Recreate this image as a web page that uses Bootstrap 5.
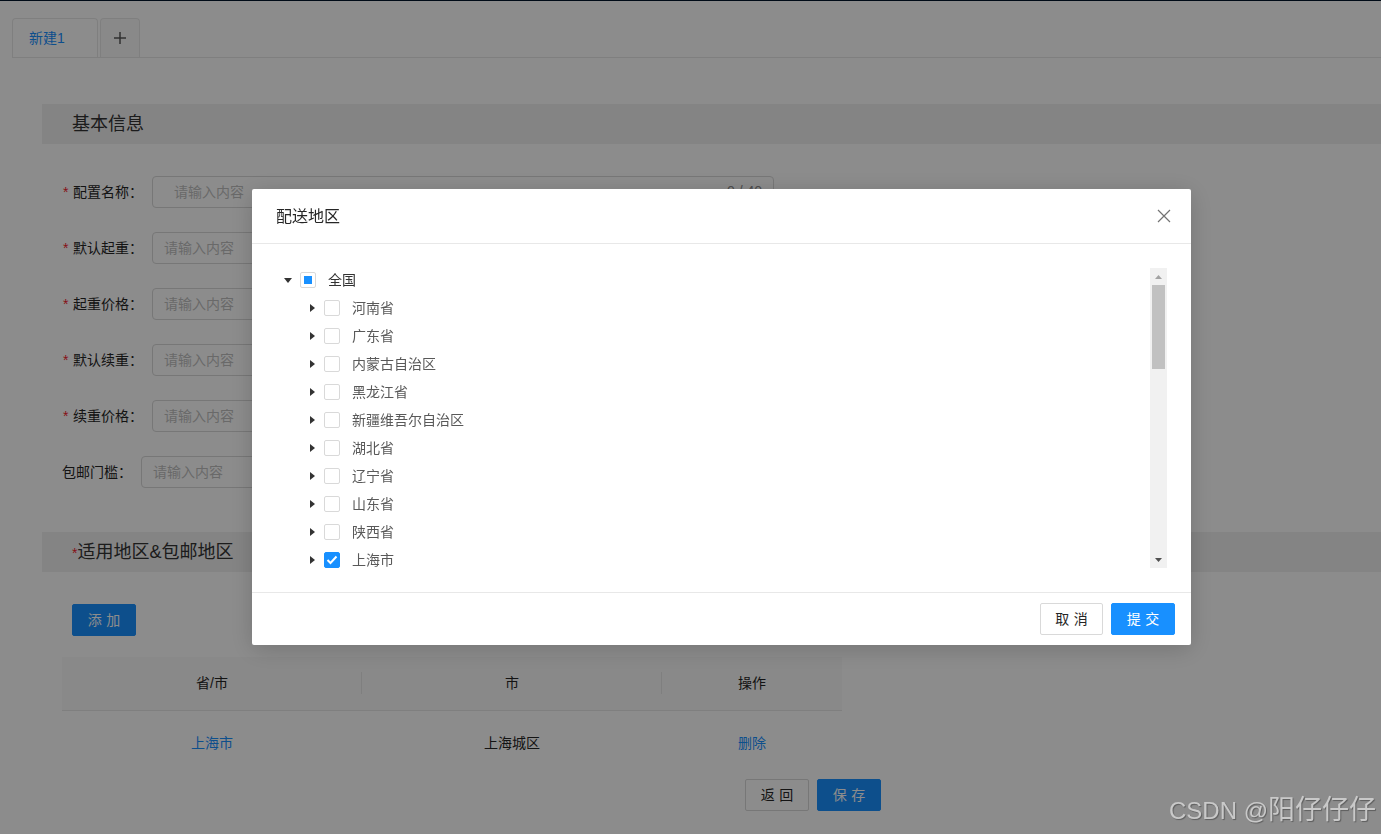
<!DOCTYPE html>
<html lang="zh-CN">
<head>
<meta charset="utf-8">
<title>配送地区</title>
<link href="https://cdn.jsdelivr.net/npm/bootstrap@5.3.0/dist/css/bootstrap.min.css" rel="stylesheet">
<style>
html,body{height:834px;overflow:hidden;background:#fff}
body{font-family:"Liberation Sans","Noto Sans CJK SC",sans-serif;font-size:14px;color:#262626;border-top:1px solid #00152a}
.tabs-bar{margin:17px 0 0 12px;border-bottom:1px solid #e8e8e8;gap:2px}
.tabs-bar .nav-link{height:39px;border:1px solid #e8e8e8;border-bottom:0;border-radius:4px 4px 0 0;margin:0;padding:0;display:flex;align-items:center;justify-content:center}
.tabs-bar .nav-link.tab-main{width:86px;color:#1890ff;background:#fff;justify-content:flex-start;padding-left:16px}
.tab-add{width:40px;background:#fafafa;color:#595959}
.content{padding:46px 0 0 42px}
.sec-title{height:40px;background:#f0f0f0;padding-left:30px;font-size:18px;line-height:41px;color:#333}
.star{color:#f5222d}
.sec-title .star{font-size:14px}
.form-area{padding:32px 0 44px 20px}
.frow{height:32px;gap:9px}
.flabel{color:#262626;white-space:nowrap}
.flabel .star{display:inline-block;width:10px;margin-left:1px;font-family:"Liberation Sans",sans-serif}
.fake-input{height:32px;width:300px;border:1px solid #d9d9d9;border-radius:4px;padding:4px 11px;font-size:14px}
.fake-input::placeholder{color:#bfbfbf}
.fake-input.wide{width:622px;padding-left:21px}
.input-wrap{position:relative}
.counter{position:absolute;right:12px;top:5px;color:#8c8c8c}
.btn-ant{width:64px;height:32px;padding:0;border-radius:2px;font-size:14px;word-spacing:.06em;line-height:30px}
.btn-blue{background:#1890ff;border:1px solid #1890ff;color:#fff}
.btn-plain{background:#fff;border:1px solid #d9d9d9;color:#262626}
.add-row{padding:32px 0 21px 30px}
.area-table{width:780px;margin:0 0 4px 20px;table-layout:fixed;--bs-table-bg:transparent}
.area-table th{height:53px;background:#fafafa;font-weight:400;text-align:center;vertical-align:middle;position:relative;border-bottom:1px solid #e8e8e8;padding:0;color:#262626}
.area-table th:not(:last-child)::after{content:"";position:absolute;right:0;top:15px;height:22px;width:1px;background:#e8e8e8}
.area-table td{height:65px;text-align:center;vertical-align:middle;border:0;padding:1px 0 0;color:#262626}
.link-blue{color:#1890ff;text-decoration:none}
.bottom-btns{margin-left:703px;gap:8px}
.modal-backdrop{--bs-backdrop-opacity:.45}
.modal-dialog.area-dialog{width:939px;max-width:939px;margin:189px 0 0 252px}
.area-dialog .modal-content{border:0;border-radius:2px;box-shadow:0 4px 24px rgba(0,0,0,.18)}
.area-dialog .modal-header{height:55px;padding:0 15px 0 24px;border-bottom:1px solid #e8e8e8;border-radius:0}
.area-dialog .modal-title{font-size:16px;line-height:22px;font-weight:400;color:#262626;margin-top:2px}
.x-btn{width:24px;height:24px;background:none;border:0;padding:0;display:flex;align-items:center;justify-content:center}
.area-dialog .modal-body{padding:24px}
.tree-box{height:300px;gap:0}
.tree{height:300px;overflow:hidden;gap:4px}
.tnode{height:24px;flex:0 0 24px;color:#595959}
.tnode.root{color:#333}
.tnode.child{padding-left:24px}
.sw{width:24px;display:flex;align-items:center;justify-content:center}
.ck{width:16px;height:16px;border:1px solid #d9d9d9;border-radius:2px;background:#fff;margin-right:12px;display:flex;align-items:center;justify-content:center}
.ck.half::before{content:"";width:8px;height:8px;background:#1890ff}
.ck.on{background:#1890ff;border-color:#1890ff}
.sbar{width:17px;height:300px;background:#f1f1f1;flex:0 0 17px}
.sbtn{height:17px;display:flex;align-items:center;justify-content:center}
.sthumb{height:84px;margin:0 2px;background:#c1c1c1}
.area-dialog .modal-footer{height:53px;padding:0 16px;border-top:1px solid #e8e8e8;gap:8px;border-radius:0}
.area-dialog .modal-footer>*{margin:0}
.area-dialog .modal-footer .btn-plain{width:63px}
.watermark{position:fixed;left:1169px;top:791px;z-index:2000;font-size:24px;line-height:38px;color:#c9c9c9;text-shadow:1px 1px 1px #5e5e5e;white-space:nowrap}
.watermark span{font-size:27px}
</style>
</head>
<body>
<ul class="nav tabs-bar">
  <li class="nav-item"><a class="nav-link tab-main" href="#">新建1</a></li>
  <li class="nav-item"><a class="nav-link tab-add" href="#" aria-label="add">
    <svg width="14" height="14" viewBox="0 0 14 14"><path d="M7 1v12M1 7h12" stroke="#595959" stroke-width="1.5" fill="none"/></svg>
  </a></li>
</ul>

<div class="content">
  <div class="sec-title">基本信息</div>
  <div class="form-area d-flex flex-column gap-4">
    <div class="frow d-flex align-items-center"><label class="flabel"><span class="star">*</span>配置名称：</label>
      <div class="input-wrap"><input class="fake-input wide" placeholder="请输入内容"><span class="counter">0 / 40</span></div></div>
    <div class="frow d-flex align-items-center"><label class="flabel"><span class="star">*</span>默认起重：</label><input class="fake-input" placeholder="请输入内容"></div>
    <div class="frow d-flex align-items-center"><label class="flabel"><span class="star">*</span>起重价格：</label><input class="fake-input" placeholder="请输入内容"></div>
    <div class="frow d-flex align-items-center"><label class="flabel"><span class="star">*</span>默认续重：</label><input class="fake-input" placeholder="请输入内容"></div>
    <div class="frow d-flex align-items-center"><label class="flabel"><span class="star">*</span>续重价格：</label><input class="fake-input" placeholder="请输入内容"></div>
    <div class="frow d-flex align-items-center"><label class="flabel">包邮门槛：</label><input class="fake-input" placeholder="请输入内容"></div>
  </div>
  <div class="sec-title"><span class="star">*</span>适用地区&amp;包邮地区</div>
  <div class="add-row"><button class="btn btn-ant btn-blue" type="button">添 加</button></div>
  <table class="table area-table">
    <colgroup><col style="width:300px"><col style="width:300px"><col style="width:180px"></colgroup>
    <thead><tr><th>省/市</th><th>市</th><th>操作</th></tr></thead>
    <tbody><tr><td><a class="link-blue" href="#">上海市</a></td><td>上海城区</td><td><a class="link-blue" href="#">删除</a></td></tr></tbody>
  </table>
  <div class="bottom-btns d-flex">
    <button class="btn btn-ant btn-plain" type="button">返 回</button>
    <button class="btn btn-ant btn-blue" type="button">保 存</button>
  </div>
</div>

<div class="modal-backdrop fade show"></div>
<div class="modal fade show d-block" tabindex="-1" role="dialog">
  <div class="modal-dialog area-dialog">
    <div class="modal-content">
      <div class="modal-header d-flex justify-content-between align-items-center">
        <h5 class="modal-title">配送地区</h5>
        <button class="x-btn" type="button" aria-label="close"><svg width="14" height="14" viewBox="0 0 14 14"><path d="M1 1l12 12M13 1L1 13" stroke="#737373" stroke-width="1.2" fill="none"/></svg></button>
      </div>
      <div class="modal-body">
        <div class="tree-box d-flex">
          <div class="tree flex-grow-1 d-flex flex-column">
            <div class="tnode root d-flex align-items-center"><span class="sw"><svg width="8" height="5" viewBox="0 0 8 5"><path d="M0 0h8L4 5z" fill="#333"/></svg></span><span class="ck half"></span>全国</div>
            <div class="tnode child d-flex align-items-center"><span class="sw"><svg width="5" height="8" viewBox="0 0 5 8"><path d="M0 0l5 4-5 4z" fill="#333"/></svg></span><span class="ck"></span>河南省</div>
            <div class="tnode child d-flex align-items-center"><span class="sw"><svg width="5" height="8" viewBox="0 0 5 8"><path d="M0 0l5 4-5 4z" fill="#333"/></svg></span><span class="ck"></span>广东省</div>
            <div class="tnode child d-flex align-items-center"><span class="sw"><svg width="5" height="8" viewBox="0 0 5 8"><path d="M0 0l5 4-5 4z" fill="#333"/></svg></span><span class="ck"></span>内蒙古自治区</div>
            <div class="tnode child d-flex align-items-center"><span class="sw"><svg width="5" height="8" viewBox="0 0 5 8"><path d="M0 0l5 4-5 4z" fill="#333"/></svg></span><span class="ck"></span>黑龙江省</div>
            <div class="tnode child d-flex align-items-center"><span class="sw"><svg width="5" height="8" viewBox="0 0 5 8"><path d="M0 0l5 4-5 4z" fill="#333"/></svg></span><span class="ck"></span>新疆维吾尔自治区</div>
            <div class="tnode child d-flex align-items-center"><span class="sw"><svg width="5" height="8" viewBox="0 0 5 8"><path d="M0 0l5 4-5 4z" fill="#333"/></svg></span><span class="ck"></span>湖北省</div>
            <div class="tnode child d-flex align-items-center"><span class="sw"><svg width="5" height="8" viewBox="0 0 5 8"><path d="M0 0l5 4-5 4z" fill="#333"/></svg></span><span class="ck"></span>辽宁省</div>
            <div class="tnode child d-flex align-items-center"><span class="sw"><svg width="5" height="8" viewBox="0 0 5 8"><path d="M0 0l5 4-5 4z" fill="#333"/></svg></span><span class="ck"></span>山东省</div>
            <div class="tnode child d-flex align-items-center"><span class="sw"><svg width="5" height="8" viewBox="0 0 5 8"><path d="M0 0l5 4-5 4z" fill="#333"/></svg></span><span class="ck"></span>陕西省</div>
            <div class="tnode child d-flex align-items-center"><span class="sw"><svg width="5" height="8" viewBox="0 0 5 8"><path d="M0 0l5 4-5 4z" fill="#333"/></svg></span><span class="ck on"><svg width="12" height="10" viewBox="0 0 12 10"><path d="M1.5 5l3 3 6-6.5" stroke="#fff" stroke-width="2" fill="none"/></svg></span>上海市</div>
          </div>
          <div class="sbar d-flex flex-column">
            <div class="sbtn"><svg width="7" height="4" viewBox="0 0 7 4"><path d="M3.5 0L7 4H0z" fill="#a3a3a3"/></svg></div>
            <div class="sthumb"></div>
            <div class="flex-grow-1"></div>
            <div class="sbtn"><svg width="7" height="4" viewBox="0 0 7 4"><path d="M0 0h7L3.5 4z" fill="#505050"/></svg></div>
          </div>
        </div>
      </div>
      <div class="modal-footer d-flex justify-content-end align-items-center">
        <button class="btn btn-ant btn-plain" type="button">取 消</button>
        <button class="btn btn-ant btn-blue" type="button">提 交</button>
      </div>
    </div>
  </div>
</div>
<div class="watermark">CSDN @<span>阳仔仔仔</span></div>
<script src="https://cdn.jsdelivr.net/npm/bootstrap@5.3.0/dist/js/bootstrap.bundle.min.js"></script>
</body>
</html>
